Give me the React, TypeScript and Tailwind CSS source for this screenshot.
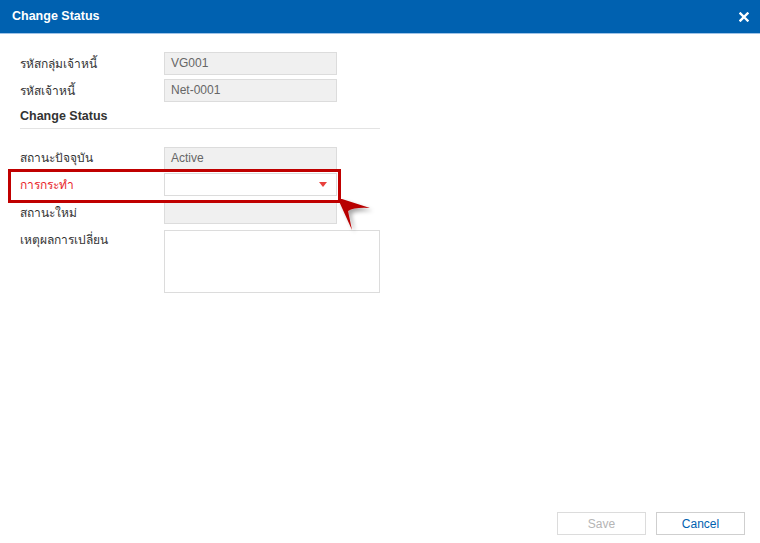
import React from "react";

const font = { fontFamily: "'Liberation Sans', Tahoma, 'DejaVu Sans', sans-serif" };

function Field({ value, className = "" }: { value?: string; className?: string }) {
  return (
    <div className={`w-[173px] h-[23px] border border-[#dcdcdc] bg-[#f0f0f0] text-[12px] text-[#666] leading-[21px] px-[6px] ${className}`}>
      {value}
    </div>
  );
}

export default function App() {
  return (
    <div className="relative w-[760px] h-[543px] bg-white text-[#333]" style={font}>
      <div className="h-[34px] bg-[#0061b0] border-b border-[#9fc3e7] flex items-center justify-between pl-[12px] pr-[10px]">
        <span className="text-white text-[12.5px] font-semibold">Change Status</span>
        <svg width="10" height="10" viewBox="0 0 10 10" className="mr-[1px]">
          <path d="M1.5 1.5 L8.5 8.5 M8.5 1.5 L1.5 8.5" stroke="white" strokeWidth="2.4" strokeLinecap="square" />
        </svg>
      </div>

      <div className="pl-[20px] pt-[18px] w-[380px] text-[12px]">
        <div className="flex items-center h-[23px]">
          <span className="w-[144px]">รหัสกลุ่มเจ้าหนี้</span>
          <Field value="VG001" />
        </div>
        <div className="flex items-center h-[23px] mt-[4px]">
          <span className="w-[144px]">รหัสเจ้าหนี้</span>
          <Field value="Net-0001" />
        </div>
        <div className="font-bold text-[12.5px] mt-[5px] h-[18px] leading-[18px]">Change Status</div>
        <div className="h-px bg-[#e3e3e3] mt-[3px]" />

        <div className="flex items-center h-[22px] mt-[18px]">
          <span className="w-[144px]">สถานะปัจจุบัน</span>
          <Field value="Active" className="h-[22px] leading-[20px]" />
        </div>
        <div className="relative flex items-center h-[23px] mt-[4px]">
          <span className="w-[144px] text-[#e8262a]">การกระทำ</span>
          <div className="w-[173px] h-[23px] border border-[#dcdcdc] bg-white flex items-center justify-end pr-[9px]">
            <svg width="8" height="5" viewBox="0 0 8 5">
              <path d="M0 0 L8 0 L4 5 Z" fill="#e8403c" />
            </svg>
          </div>
          <div className="absolute left-[-12px] top-[-4px] w-[333px] h-[34px] border-[3px] border-[#c00000]" />
        </div>
        <div className="flex items-center h-[23px] mt-[5px]">
          <span className="w-[144px]">สถานะใหม่</span>
          <Field />
        </div>
        <div className="flex items-start mt-[6px]">
          <span className="w-[144px] pt-[1px]">เหตุผลการเปลี่ยน</span>
          <div className="w-[216px] h-[63px] border border-[#dcdcdc] bg-white" />
        </div>
      </div>

      <svg className="absolute left-[334px] top-[196px]" width="46" height="40" viewBox="0 0 46 40">
        <defs>
          <filter id="sh" x="-50%" y="-50%" width="200%" height="200%">
            <feGaussianBlur in="SourceAlpha" stdDeviation="2" />
            <feOffset dx="3" dy="3" result="b" />
            <feComponentTransfer><feFuncA type="linear" slope="0.35" /></feComponentTransfer>
            <feMerge><feMergeNode /><feMergeNode in="SourceGraphic" /></feMerge>
          </filter>
        </defs>
        <path d="M4 3 L18 34 L14 15 Q20 11 36 12 L8 3 Z" fill="#b80000" filter="url(#sh)" />
      </svg>

      <div className="absolute left-[557px] top-[512px] flex gap-[10px] text-[12px]">
        <div className="w-[89px] h-[23px] border border-[#dcdcdc] bg-white text-[#b5b5b5] flex items-center justify-center">Save</div>
        <div className="w-[89px] h-[23px] border border-[#cfcfcf] bg-white text-[#0061b0] flex items-center justify-center">Cancel</div>
      </div>
    </div>
  );
}
